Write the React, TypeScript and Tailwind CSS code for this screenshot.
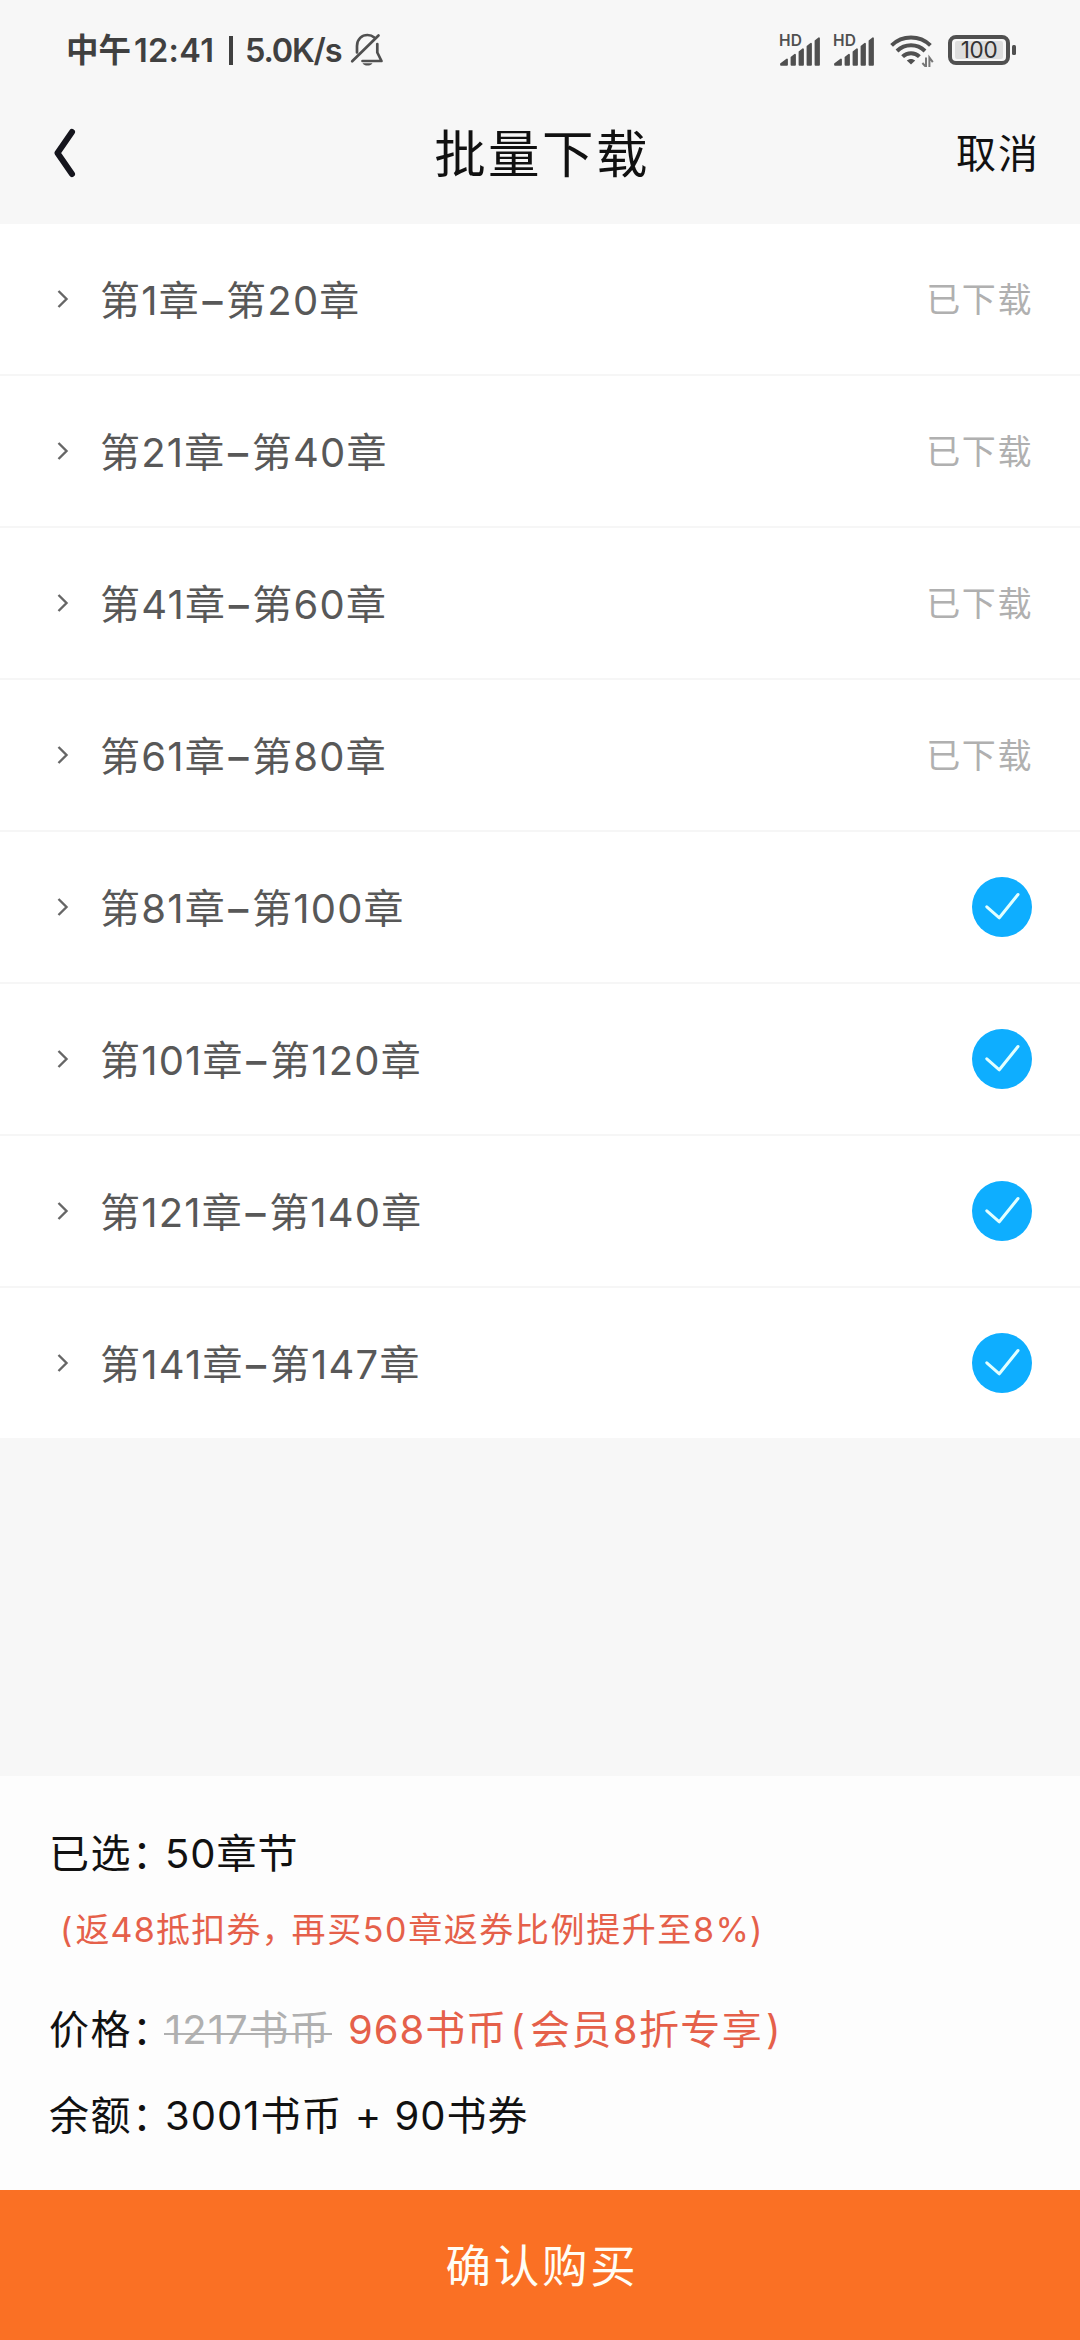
import clsx from 'clsx'

const chapters = [
    { from: 1, to: 20, downloaded: true },
    { from: 21, to: 40, downloaded: true },
    { from: 41, to: 60, downloaded: true },
    { from: 61, to: 80, downloaded: true },
    { from: 81, to: 100, downloaded: false },
    { from: 101, to: 120, downloaded: false },
    { from: 121, to: 140, downloaded: false },
    { from: 141, to: 147, downloaded: false },
]

function BellOff() {
    return (
        <svg width="34" height="34" viewBox="0 0 34 34" fill="none" stroke="#505050" strokeWidth="2.7" strokeLinecap="round" strokeLinejoin="round">
            <path d="M7 19.5V13C7 6 12 2 17.5 2c2.5 0 5 .8 6.8 2.4" />
            <path d="M27.3 11v8.5L31.5 28H12.5" />
            <path d="M2.2 28.3 28.5 2.5" />
            <path d="M12.5 30.2h10c-1 1.6-2.8 2.4-5 2.4s-4-.8-5-2.4z" fill="#505050" stroke="none" />
        </svg>
    )
}

function Signal() {
    return (
        <div className="relative h-[34px] w-[43px]">
            <span className="absolute left-0 top-[-1px] text-[15.5px] font-semibold leading-[17px] tracking-[0.2px]">HD</span>
            <svg className="absolute left-0 top-0" width="43" height="34" fill="#505050" stroke="#505050" strokeWidth="1.8" strokeLinejoin="round">
                <path d="M2 31 8 26.5v5.3H2z" />
                <path d="M12.5 24.5 16 21.8v10h-3.5z" />
                <path d="M20.5 19 24 16.2v15.6h-3.5z" />
                <path d="M28.5 13.5 32 10.8v21h-3.5z" />
                <path d="M36.5 8 40 5.2v26.6h-3.5z" />
            </svg>
        </div>
    )
}

function Wifi() {
    return (
        <svg width="44" height="34" viewBox="0 0 44 34" fill="none" stroke="#505050" strokeWidth="4">
            <path d="M1.6 12.4a28 28 0 0 1 38.8 0" />
            <path d="M7 18a20 20 0 0 1 28 0" />
            <path d="M12.6 23.6a12 12 0 0 1 16.8 0" />
            <path d="M16.8 27.6c2.2-2.2 6.2-2.2 8.4 0L21 31.6z" fill="#505050" stroke="none" />
            <path d="M36 24.5v9.5L32.4 30M39.4 34v-9.5l3.4 4.6" strokeWidth="2" stroke="#777" />
        </svg>
    )
}

function Battery() {
    return (
        <div className="flex items-center gap-[2px]">
            <div className="flex h-[30px] w-[62px] items-center justify-center rounded-[8px] border-4 border-[#505050]">
                <div className="flex h-[18px] w-[48px] items-center justify-center rounded-[2px] bg-[#dedede] text-[22.5px] leading-none tracking-[-0.3px] text-[#333]">
                    100
                </div>
            </div>
            <div className="h-[10px] w-[4px] rounded-[1.5px] bg-[#505050]" />
        </div>
    )
}

function CheckCircle() {
    return (
        <svg width="60" height="60" viewBox="0 0 60 60" fill="none">
            <circle cx="30" cy="30" r="30" fill="#0eaeff" />
            <path d="M14.8 29.8 27.3 40.8 46 17.5" stroke="#e2ffff" strokeWidth="3" strokeLinecap="round" strokeLinejoin="round" />
        </svg>
    )
}

export default function App() {
    return (
        <div className="flex h-[2340px] w-[1080px] flex-col overflow-hidden whitespace-nowrap bg-[#f7f7f7] font-['Inter','Noto_Sans_CJK_SC',sans-serif] text-[#111]">
            {/* Status bar */}
            <div className="flex h-[100px] shrink-0 items-center justify-between pl-[66px] pr-[64px] text-[#404040]">
                <div className="flex h-[44px] items-center text-[32.5px] font-semibold leading-[44px]">
                    <span className="w-[68px] pt-[2px] font-bold">中午</span>
                    <span className="w-[95px] pt-[1px] tracking-[0.3px]">12:41</span>
                    <span className="h-[29px] w-[4px] bg-[#404040]" />
                    <span className="ml-[12px] w-[105px] pt-[1px] tracking-[-1.2px]">5.0K/s</span>
                    <BellOff />
                </div>
                <div className="flex items-center text-[#505050]">
                    <Signal />
                    <span className="w-[11px]" />
                    <Signal />
                    <span className="w-[14px]" />
                    <Wifi />
                    <span className="w-[14px]" />
                    <Battery />
                </div>
            </div>

            {/* Title bar */}
            <div className="grid h-[124px] shrink-0 grid-cols-3 items-center pb-[18px] pl-[53px] pr-[40px]">
                <svg width="24" height="50" viewBox="0 0 24 50" fill="none" stroke="#15151d" strokeWidth="6" strokeLinecap="round" strokeLinejoin="round">
                    <path d="M19 4 4.5 25 19 46" />
                </svg>
                <h1 className="pr-[9px] pt-[1px] text-center text-[51.5px] leading-[60px] tracking-[2.4px]">批量下载</h1>
                <button className="pt-[2px] text-right text-[40px] leading-[50px] tracking-[2px]">取消</button>
            </div>

            {/* Chapter groups */}
            <ul className="flex flex-col divide-y-2 divide-[#f6f6f6] bg-white">
                {chapters.map((c) => (
                    <li key={c.from} className="flex h-[152px] items-center pl-[57px] pr-[48px] last:h-[150px]">
                        <svg width="12" height="20" viewBox="0 0 12 20" fill="none" stroke="#666" strokeWidth="2.4">
                            <path d="M1.5 2 9.5 10 1.5 18" />
                        </svg>
                        <span className="ml-[31px] flex-1 pt-[3px] text-[40px] leading-[60px] tracking-[1.2px] text-[#585858]">
                            第{c.from}章<span className="mx-[2.5px] font-medium">–</span>第{c.to}章
                        </span>
                        {c.downloaded ? (
                            <span className={clsx('mr-[-1px] pt-[2px] text-[34px] leading-[50px] tracking-[1.6px] text-[#b0b0b0]')}>已下载</span>
                        ) : (
                            <CheckCircle />
                        )}
                    </li>
                ))}
            </ul>

            {/* Order summary */}
            <div className="mt-auto flex h-[414px] shrink-0 flex-col bg-[#fdfdfd] pl-[49px] pt-[48px] text-[40px] leading-[60px] tracking-[1px]">
                <div className="flex">
                    <span className="w-[116px] tracking-[1.5px]">已选：</span>
                    <span>50章节</span>
                </div>
                <div className="mt-[18px] flex pl-[11px] text-[34px] leading-[56px] text-[#e5604a]">
                    <span className="mr-[2px]">(</span>
                    <span className="tracking-[1.2px]">返48抵扣券</span>
                    <span className="mr-[12px] [font-feature-settings:'halt']">，</span>
                    <span className="tracking-[1.6px]">再买50章返券比例提升至8</span>
                    <span className="tracking-[-1px]">%</span>
                    <span className="ml-[2px]">)</span>
                </div>
                <div className="mt-[42px] flex">
                    <span className="w-[116px] tracking-[1.5px]">价格：</span>
                    <span className="relative w-[168px] text-[#b0b0b0]">
                        1217书币
                        <i className="absolute left-[-1px] top-[33px] h-[2px] w-[168px] bg-[#b0b0b0]" />
                    </span>
                    <span className="ml-[15px] text-[#e5604a]">
                        968书币<span className="ml-[3px] mr-[4px]">(</span><span className="tracking-[1.4px]">会员8折专享</span><span className="ml-[3px]">)</span>
                    </span>
                </div>
                <div className="mt-[26px] flex">
                    <span className="w-[116px] tracking-[1.5px]">余额：</span>
                    <span>3001书币 + 90书券</span>
                </div>
            </div>

            <button className="h-[150px] shrink-0 bg-[#fa7024] pl-[4px] pt-[4px] text-[45.5px] tracking-[2.8px] text-[#fffdf5]">确认购买</button>
        </div>
    )
}
